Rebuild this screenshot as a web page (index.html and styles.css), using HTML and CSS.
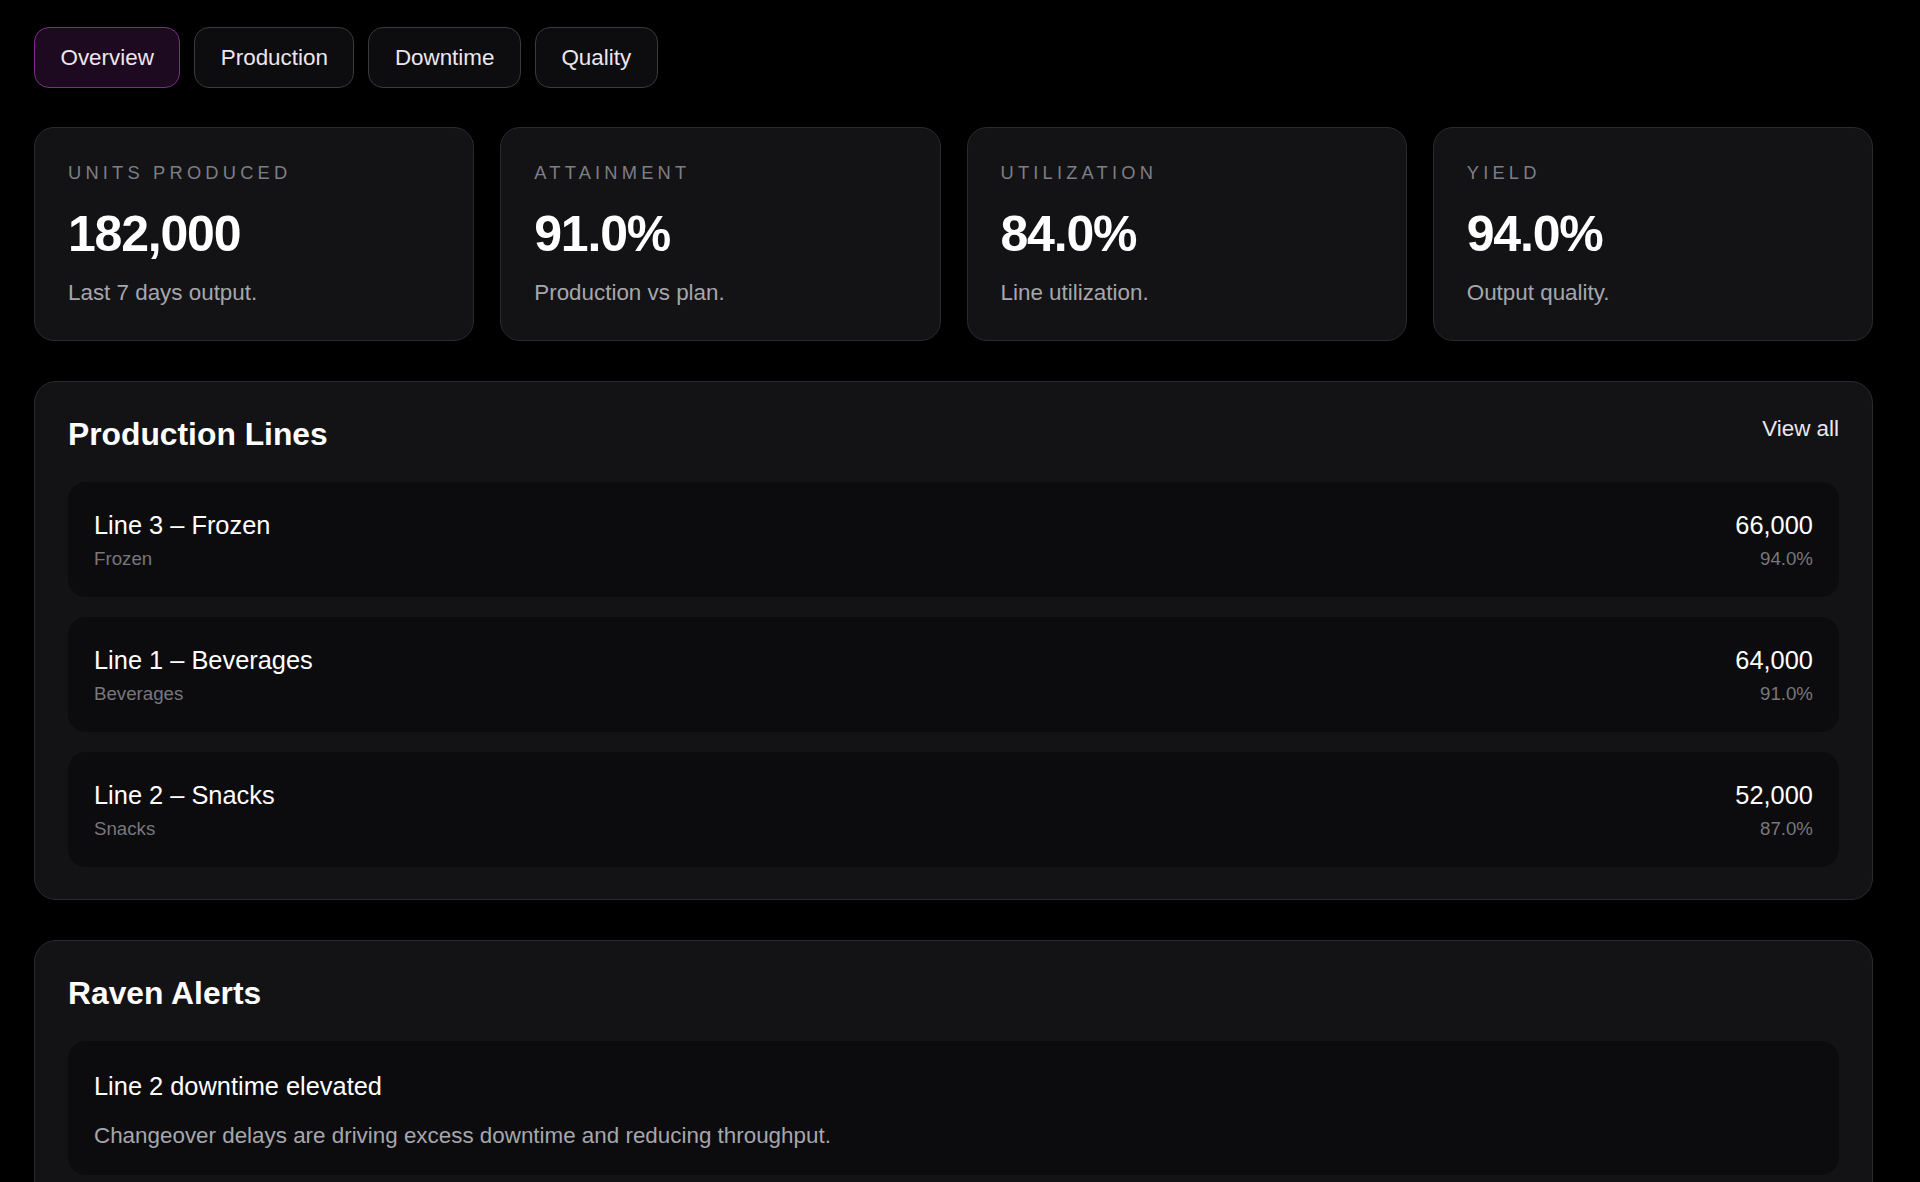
FILE: index.html
```html
<!DOCTYPE html>
<html lang="en">
<head>
    <meta charset="UTF-8">
    <meta name="viewport" content="width=device-width, initial-scale=1.0">
    <title>Plant Overview</title>
    <link rel="stylesheet" href="styles.css">
</head>
<body>
    <div class="page">
        <nav class="tabs">
            <button class="tab active">Overview</button>
            <button class="tab">Production</button>
            <button class="tab">Downtime</button>
            <button class="tab">Quality</button>
        </nav>

        <div class="stats">
            <div class="stat-card">
                <div class="stat-label">Units Produced</div>
                <div class="stat-value">182,000</div>
                <div class="stat-note">Last 7 days output.</div>
            </div>
            <div class="stat-card">
                <div class="stat-label">Attainment</div>
                <div class="stat-value">91.0%</div>
                <div class="stat-note">Production vs plan.</div>
            </div>
            <div class="stat-card">
                <div class="stat-label">Utilization</div>
                <div class="stat-value">84.0%</div>
                <div class="stat-note">Line utilization.</div>
            </div>
            <div class="stat-card">
                <div class="stat-label">Yield</div>
                <div class="stat-value">94.0%</div>
                <div class="stat-note">Output quality.</div>
            </div>
        </div>

        <section class="panel">
            <div class="panel-head">
                <h2>Production Lines</h2>
                <a class="view-all" href="#">View all</a>
            </div>
            <div class="line-list">
                <div class="line-row">
                    <div>
                        <div class="line-name">Line 3 – Frozen</div>
                        <div class="line-sub">Frozen</div>
                    </div>
                    <div class="line-right">
                        <div class="line-name">66,000</div>
                        <div class="line-sub">94.0%</div>
                    </div>
                </div>
                <div class="line-row">
                    <div>
                        <div class="line-name">Line 1 – Beverages</div>
                        <div class="line-sub">Beverages</div>
                    </div>
                    <div class="line-right">
                        <div class="line-name">64,000</div>
                        <div class="line-sub">91.0%</div>
                    </div>
                </div>
                <div class="line-row">
                    <div>
                        <div class="line-name">Line 2 – Snacks</div>
                        <div class="line-sub">Snacks</div>
                    </div>
                    <div class="line-right">
                        <div class="line-name">52,000</div>
                        <div class="line-sub">87.0%</div>
                    </div>
                </div>
            </div>
        </section>

        <section class="panel">
            <div class="panel-head">
                <h2>Raven Alerts</h2>
            </div>
            <div class="alert">
                <div class="line-name">Line 2 downtime elevated</div>
                <p class="alert-text">Changeover delays are driving excess downtime and reducing throughput.</p>
            </div>
        </section>
    </div>
</body>
</html>
```

FILE: styles.css
```css
/* Base */
body {
    margin: 0;
    background-color: #000;
    color: #fff;
    font-family: "Liberation Sans", Arial, sans-serif;
}

.page {
    padding: 27px 47px 40px 34px;
    display: flex;
    flex-direction: column;
    gap: 40px;
}

/* Tabs */
.tabs {
    display: flex;
    gap: 14px;
    margin-bottom: -1px;
}

.tab {
    font-family: inherit;
    font-size: 22.4px;
    color: #ece6ee;
    background: #0d0d0f;
    border: 1px solid #3a3a3f;
    border-radius: 15px;
    padding: 16.5px 25.5px;
    line-height: normal;
    cursor: pointer;
}

.tab.active {
    background: #1d0a20;
    border-color: #7c2f87;
}

/* Stat cards */
.stats {
    display: grid;
    grid-template-columns: repeat(4, 1fr);
    gap: 26px;
}

.stat-card {
    background: #131316;
    border: 1px solid #2b2b2f;
    border-radius: 20px;
    padding: 34px 33px 34px;
}

.stat-label {
    font-size: 18.3px;
    letter-spacing: 4.2px;
    text-transform: uppercase;
    color: #7e7e85;
    margin-bottom: 22px;
}

.stat-value {
    font-size: 50px;
    font-weight: bold;
    letter-spacing: -1.2px;
    line-height: 1.15;
    margin-bottom: 16px;
}

.stat-note {
    font-size: 22.4px;
    color: #a6a6ad;
}

/* Panels */
.panel {
    background: #131316;
    border: 1px solid #2b2b2f;
    border-radius: 22px;
    padding: 34px 33px 32px;
}

.panel-head {
    display: flex;
    justify-content: space-between;
    align-items: flex-start;
    margin-bottom: 29px;
}

.panel-head h2 {
    margin: 0;
    font-size: 31.8px;
    font-weight: bold;
}

.view-all {
    font-size: 22.4px;
    color: #ece6ee;
    text-decoration: none;
}

.line-list {
    display: flex;
    flex-direction: column;
    gap: 20px;
}

.line-row {
    display: flex;
    justify-content: space-between;
    background: #0c0c0e;
    border-radius: 18px;
    padding: 29px 26px 27px;
}

.line-right {
    text-align: right;
}

.line-name {
    font-size: 25.4px;
    color: #fff;
}

.line-sub {
    font-size: 18.7px;
    color: #77777d;
    margin-top: 8px;
}

/* Alerts */
.alert {
    background: #0c0c0e;
    border-radius: 18px;
    padding: 31px 26px 26px;
}

.alert-text {
    margin: 22px 0 0;
    font-size: 22.4px;
    color: #a6a6ad;
}
```
